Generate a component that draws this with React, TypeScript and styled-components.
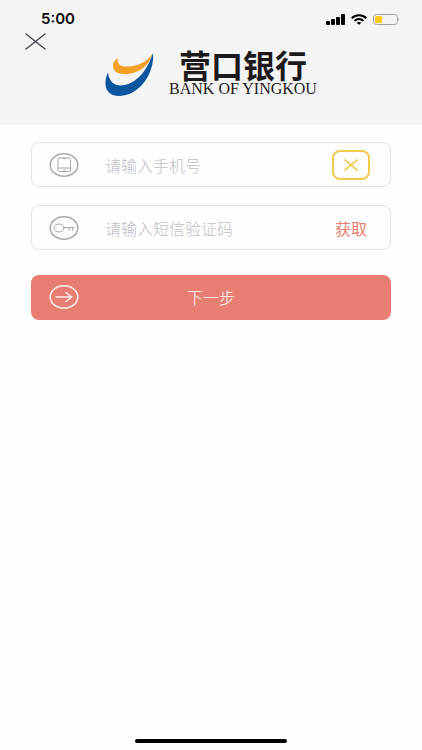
import React, { useState } from "react";
import styled, { createGlobalStyle } from "styled-components";

const GlobalStyle = createGlobalStyle`
  * { box-sizing: border-box; }
  body {
    margin: 0;
    background: #fefefe;
    font-family: "Noto Sans CJK SC", sans-serif;
  }
  button, input { font-family: inherit; }
`;

const Page = styled.div`
  min-height: 100vh;
  display: flex;
  flex-direction: column;
`;

const Header = styled.header`
  background: #f4f4f4;
  padding-bottom: 26px;
`;

const StatusBar = styled.div`
  display: flex;
  align-items: center;
  justify-content: space-between;
  height: 30px;
  padding: 8px 22px 0 41px;
`;

const Time = styled.time`
  font: 600 15px/20px Inter, sans-serif;
  color: #0a0a0a;
`;

const StatusIcons = styled.div`
  display: flex;
  align-items: center;
  gap: 6px;
  svg { display: block; }
`;

const CloseButton = styled.button`
  display: block;
  margin-left: 24px;
  padding: 2px 0 0;
  height: 20px;
  border: 0;
  background: none;
  cursor: pointer;
  svg { display: block; }
`;

const Brand = styled.div`
  display: flex;
  justify-content: center;
  align-items: center;
  gap: 15px;
`;

const BrandText = styled.div`
  display: flex;
  flex-direction: column;
  align-items: center;
  color: #1c1a1a;
`;

const BrandName = styled.h1`
  margin: 0;
  font-size: 32px;
  line-height: 29px;
  font-weight: 700;
  white-space: nowrap;
`;

const BrandLatin = styled.span`
  font: 16px/20px "Liberation Serif", serif;
  white-space: nowrap;
`;

const Form = styled.form`
  display: flex;
  flex-direction: column;
  gap: 18px;
  padding: 17px 31px 0;
`;

const Field = styled.label`
  display: flex;
  align-items: center;
  height: 45px;
  padding: 0 20px 0 17px;
  border: 1px solid #e4e4e6;
  border-radius: 8px;
`;

const TextInput = styled.input`
  flex: 1;
  min-width: 0;
  margin-left: 26px;
  padding: 0;
  border: 0;
  outline: 0;
  background: none;
  font-size: 16px;
  line-height: 24px;
  color: #333;
  &::placeholder { color: #c0c0c6; opacity: 1; font-weight: 300; }
`;

const ClearButton = styled.button`
  display: flex;
  align-items: center;
  justify-content: center;
  width: 38px;
  height: 30px;
  padding: 0;
  border: 2px solid #f0cb4c;
  border-radius: 8px;
  background: none;
  cursor: pointer;
`;

const CodeButton = styled.button`
  padding: 0 3px;
  border: 0;
  background: none;
  font-size: 16px;
  line-height: 24px;
  color: #e87e72;
  cursor: pointer;
`;

const SubmitButton = styled.button`
  display: grid;
  grid-template-columns: 30px 1fr 30px;
  align-items: center;
  height: 45px;
  margin-top: 7px;
  padding: 0 18px 2px;
  border: 0;
  border-radius: 8px;
  background: #e87e72;
  color: #fff;
  font-size: 16px;
  line-height: 24px;
  font-weight: 300;
  cursor: pointer;
`;

const HomeArea = styled.footer`
  display: flex;
  justify-content: center;
  margin-top: auto;
  padding-bottom: 7px;
`;

const HomeIndicator = styled.div`
  width: 36%;
  height: 4px;
  border-radius: 2px;
  background: #000;
`;

const RoundIcon = ({ color, children }: { color: string; children: React.ReactNode }) => (
  <svg width="30" height="24" viewBox="0 0 30 24" fill="none" stroke={color} strokeLinecap="round" strokeLinejoin="round" aria-hidden="true">
    <ellipse cx="15" cy="12" rx="13.8" ry="11.2" strokeWidth="1.5" />
    {children}
  </svg>
);

const Logo = () => (
  <svg width="49" height="44" viewBox="0 0 49 44" aria-hidden="true">
    <path d="M47.5 1 C44 13 34 19.5 23 21 C14 22 7.5 19 8 12 C8.2 9 10 7 13 5 C11.5 11.5 16 14 23 13.5 C33 13 42 9 47.5 1Z" fill="#f4a024" />
    <path d="M48 0 C49.5 16 40 34 25.5 40.5 C12 46 0 42 .5 30 C.5 26 1.5 22.5 3 19.5 C4 29.5 10.5 34 20 32 C33 29 43 16 48 0Z" fill="#0b559f" />
  </svg>
);

export default function App() {
  const [phone, setPhone] = useState("");
  const [code, setCode] = useState("");

  return (
    <Page>
      <GlobalStyle />
      <Header>
        <StatusBar>
          <Time>5:00</Time>
          <StatusIcons>
            <svg width="19" height="11" viewBox="0 0 19 11" fill="#000" aria-hidden="true">
              <rect x="0" y="7" width="4" height="4" rx="1" />
              <rect x="5" y="5" width="4" height="6" rx="1" />
              <rect x="10" y="3" width="4" height="8" rx="1" />
              <rect x="15" y="0" width="4" height="11" rx="1" />
            </svg>
            <svg width="16" height="11" viewBox="0 0 16 11" fill="none" stroke="#000" strokeWidth="2" aria-hidden="true">
              <path d="M.7 4.2 C4.7 .2 11.3 .2 15.3 4.2" />
              <path d="M3.5 6.9 C6 4.4 10 4.4 12.5 6.9" />
              <path d="M8 10.8 L5.6 8.7 C7 7.6 9 7.6 10.4 8.7Z" fill="#000" stroke="none" />
            </svg>
            <svg width="27" height="11" viewBox="0 0 27 11" aria-hidden="true">
              <rect x=".5" y=".5" width="24" height="10" rx="3" fill="none" stroke="#a0a0a0" />
              <rect x="2" y="2" width="7" height="7" rx="1.5" fill="#fbc911" />
              <path d="M25.5 3.6 Q27 5.5 25.5 7.4Z" fill="#a0a0a0" />
            </svg>
          </StatusIcons>
        </StatusBar>
        <CloseButton type="button" aria-label="关闭">
          <svg width="22" height="18" viewBox="0 0 22 18" stroke="#4a4a55" strokeWidth="1.5" strokeLinecap="round">
            <path d="M2 2 L21 17 M21 2 L2 17" />
          </svg>
        </CloseButton>
        <Brand>
          <Logo />
          <BrandText>
            <BrandName>营口银行</BrandName>
            <BrandLatin>BANK OF YINGKOU</BrandLatin>
          </BrandText>
        </Brand>
      </Header>
      <Form onSubmit={(e) => e.preventDefault()}>
        <Field>
          <RoundIcon color="#a9a9a9">
            <rect x="9" y="5" width="12.5" height="13.5" rx="1.5" />
            <path d="M9 15 H21.5 M13.5 5.5 H17 M14.5 17 H16" />
          </RoundIcon>
          <TextInput type="tel" aria-label="手机号" placeholder="请输入手机号" value={phone} onChange={(e) => setPhone(e.target.value)} />
          <ClearButton type="button" aria-label="清除" onClick={() => setPhone("")}>
            <svg width="14" height="12" viewBox="0 0 14 12" stroke="#efc535" strokeWidth="1.6" strokeLinecap="round">
              <path d="M1 1 L13 11 M13 1 L1 11" />
            </svg>
          </ClearButton>
        </Field>
        <Field>
          <RoundIcon color="#a9a9a9">
            <ellipse cx="10" cy="12" rx="5" ry="4" />
            <path d="M15 11.5 H25 M20 11.5 V14.5 M23.5 11.5 V14.5" />
          </RoundIcon>
          <TextInput type="text" aria-label="短信验证码" placeholder="请输入短信验证码" value={code} onChange={(e) => setCode(e.target.value)} />
          <CodeButton type="button">获取</CodeButton>
        </Field>
        <SubmitButton type="submit">
          <RoundIcon color="#fff0ee">
            <path d="M7 12 H22.5 M17 7.5 L22.8 12 L17 16.5" strokeWidth="1.5" />
          </RoundIcon>
          <span>下一步</span>
        </SubmitButton>
      </Form>
      <HomeArea>
        <HomeIndicator />
      </HomeArea>
    </Page>
  );
}
